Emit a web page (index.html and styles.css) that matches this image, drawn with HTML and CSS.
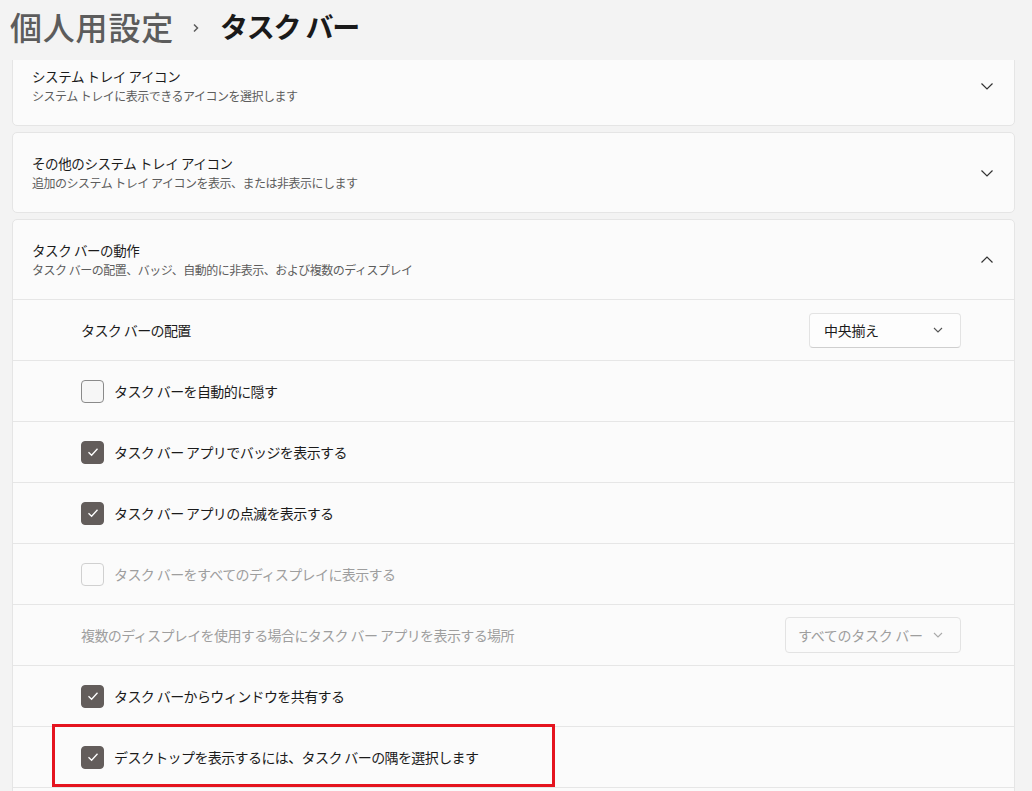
FILE: index.html
```html
<!DOCTYPE html>
<html lang="ja">
<head>
    <meta charset="UTF-8">
    <title>タスク バー</title>
    <link rel="stylesheet" href="styles.css">
</head>
<body>
    <div class="header">
        <span class="crumb">個人用設定</span>
        <svg class="crumb-sep" width="12" height="12" viewBox="0 0 12 12"><path d="M4 2.5 L7.5 6 L4 9.5" fill="none" stroke="#5c5c5c" stroke-width="1.5"/></svg>
        <span class="page">タスク バー</span>
    </div>

    <div class="content">
        <div class="card card-top">
            <div class="card-head">
                <div class="texts">
                    <div class="card-title">システム トレイ アイコン</div>
                    <div class="card-sub">システム トレイに表示できるアイコンを選択します</div>
                </div>
                <svg class="chev" width="14" height="14" viewBox="0 0 14 14"><path d="M1.5 4.5 L7 10 L12.5 4.5" fill="none" stroke="#333" stroke-width="1.2"/></svg>
            </div>
        </div>

        <div class="card">
            <div class="card-head">
                <div class="texts">
                    <div class="card-title">その他のシステム トレイ アイコン</div>
                    <div class="card-sub">追加のシステム トレイ アイコンを表示、または非表示にします</div>
                </div>
                <svg class="chev" width="14" height="14" viewBox="0 0 14 14"><path d="M1.5 4.5 L7 10 L12.5 4.5" fill="none" stroke="#333" stroke-width="1.2"/></svg>
            </div>
        </div>

        <div class="card">
            <div class="card-head">
                <div class="texts">
                    <div class="card-title">タスク バーの動作</div>
                    <div class="card-sub">タスク バーの配置、バッジ、自動的に非表示、および複数のディスプレイ</div>
                </div>
                <svg class="chev" width="14" height="14" viewBox="0 0 14 14"><path d="M1.5 9.5 L7 4 L12.5 9.5" fill="none" stroke="#333" stroke-width="1.2"/></svg>
            </div>

            <div class="row">
                <span class="label">タスク バーの配置</span>
                <div class="select">
                    <span>中央揃え</span>
                    <svg width="10" height="10" viewBox="0 0 10 10"><path d="M1 3 L5 7 L9 3" fill="none" stroke="#555" stroke-width="1.1"/></svg>
                </div>
            </div>
            <div class="row">
                <span class="box"></span>
                <span class="label">タスク バーを自動的に隠す</span>
            </div>
            <div class="row">
                <span class="box checked"><svg width="14" height="14" viewBox="0 0 14 14"><path d="M2.5 7.3 L5.6 10.3 L11.5 3.8" fill="none" stroke="#fff" stroke-width="1.3"/></svg></span>
                <span class="label">タスク バー アプリでバッジを表示する</span>
            </div>
            <div class="row">
                <span class="box checked"><svg width="14" height="14" viewBox="0 0 14 14"><path d="M2.5 7.3 L5.6 10.3 L11.5 3.8" fill="none" stroke="#fff" stroke-width="1.3"/></svg></span>
                <span class="label">タスク バー アプリの点滅を表示する</span>
            </div>
            <div class="row disabled">
                <span class="box"></span>
                <span class="label">タスク バーをすべてのディスプレイに表示する</span>
            </div>
            <div class="row disabled">
                <span class="label">複数のディスプレイを使用する場合にタスク バー アプリを表示する場所</span>
                <div class="select wide">
                    <span>すべてのタスク バー</span>
                    <svg width="10" height="10" viewBox="0 0 10 10"><path d="M1 3 L5 7 L9 3" fill="none" stroke="#aaa" stroke-width="1.1"/></svg>
                </div>
            </div>
            <div class="row">
                <span class="box checked"><svg width="14" height="14" viewBox="0 0 14 14"><path d="M2.5 7.3 L5.6 10.3 L11.5 3.8" fill="none" stroke="#fff" stroke-width="1.3"/></svg></span>
                <span class="label">タスク バーからウィンドウを共有する</span>
            </div>
            <div class="row">
                <span class="box checked"><svg width="14" height="14" viewBox="0 0 14 14"><path d="M2.5 7.3 L5.6 10.3 L11.5 3.8" fill="none" stroke="#fff" stroke-width="1.3"/></svg></span>
                <span class="label">デスクトップを表示するには、タスク バーの隅を選択します</span>
                <div class="highlight"></div>
            </div>
            <div class="row"></div>
        </div>
    </div>
</body>
</html>
```

FILE: styles.css
```css
body {
    margin: 0;
    background-color: #f3f3f3;
    font-family: "Noto Sans CJK JP", "Noto Sans", sans-serif;
    color: #1b1b1b;
    height: 791px;
    overflow: hidden;
}

.header {
    height: 60px;
    display: flex;
    align-items: center;
    padding-left: 10px;
    padding-bottom: 8px;
    box-sizing: border-box;
}

.crumb {
    font-size: 32px;
    color: #5c5c5c;
    font-weight: 500;
    letter-spacing: 0.8px;
}

.crumb-sep {
    margin: 4px 18px 0 16px;
}

.page {
    font-size: 28px;
    font-weight: 700;
    color: #1a1a1a;
    letter-spacing: -1.2px;
}

.content {
    padding: 0 17px 0 12px;
    height: 731px;
    overflow: hidden;
}

.card {
    background-color: #fbfbfb;
    border: 1px solid #e5e5e5;
    border-radius: 5px;
    margin-bottom: 6px;
}

.card-top {
    margin-top: -15px;
}

.card-head {
    height: 79px;
    display: flex;
    align-items: center;
    justify-content: space-between;
    padding: 0 20px 0 19px;
}

.card-title {
    font-size: 13.5px;
    line-height: 20px;
    letter-spacing: -0.4px;
}

.card-sub {
    font-size: 12px;
    line-height: 20px;
    color: #5d5d5d;
    letter-spacing: -0.5px;
}

.row {
    position: relative;
    height: 60px;
    border-top: 1px solid #e6e6e6;
    display: flex;
    align-items: center;
    padding: 0 53px 0 68px;
}

.label {
    font-size: 14px;
    letter-spacing: -0.6px;
    flex: 1;
    white-space: nowrap;
}

.box {
    width: 21px;
    height: 21px;
    border: 1px solid #8a8a8a;
    border-radius: 4px;
    background-color: #f6f6f6;
    margin-right: 10px;
    display: flex;
    align-items: center;
    justify-content: center;
}

.box.checked {
    background-color: #635d5b;
    border-color: #635d5b;
}

.disabled .label {
    color: #9e9e9e;
}

.disabled .box {
    border-color: #d0d0d0;
    background-color: #fbfbfb;
}

.select {
    width: 152px;
    height: 35px;
    box-sizing: border-box;
    border: 1px solid #e3e3e3;
    border-bottom-color: #cfcfcf;
    border-radius: 4px;
    background-color: #fdfdfd;
    display: flex;
    align-items: center;
    justify-content: space-between;
    padding: 0 17px 0 14px;
    font-size: 14px;
    letter-spacing: -0.3px;
}

.select.wide {
    width: 176px;
    height: 36px;
    border-bottom-color: #e3e3e3;
    background-color: #fbfbfb;
    color: #9e9e9e;
    padding-left: 12px;
    white-space: nowrap;
}

.highlight {
    position: absolute;
    left: 39px;
    top: -3px;
    width: 497px;
    height: 57px;
    border: 3px solid #e5141f;
}
```
